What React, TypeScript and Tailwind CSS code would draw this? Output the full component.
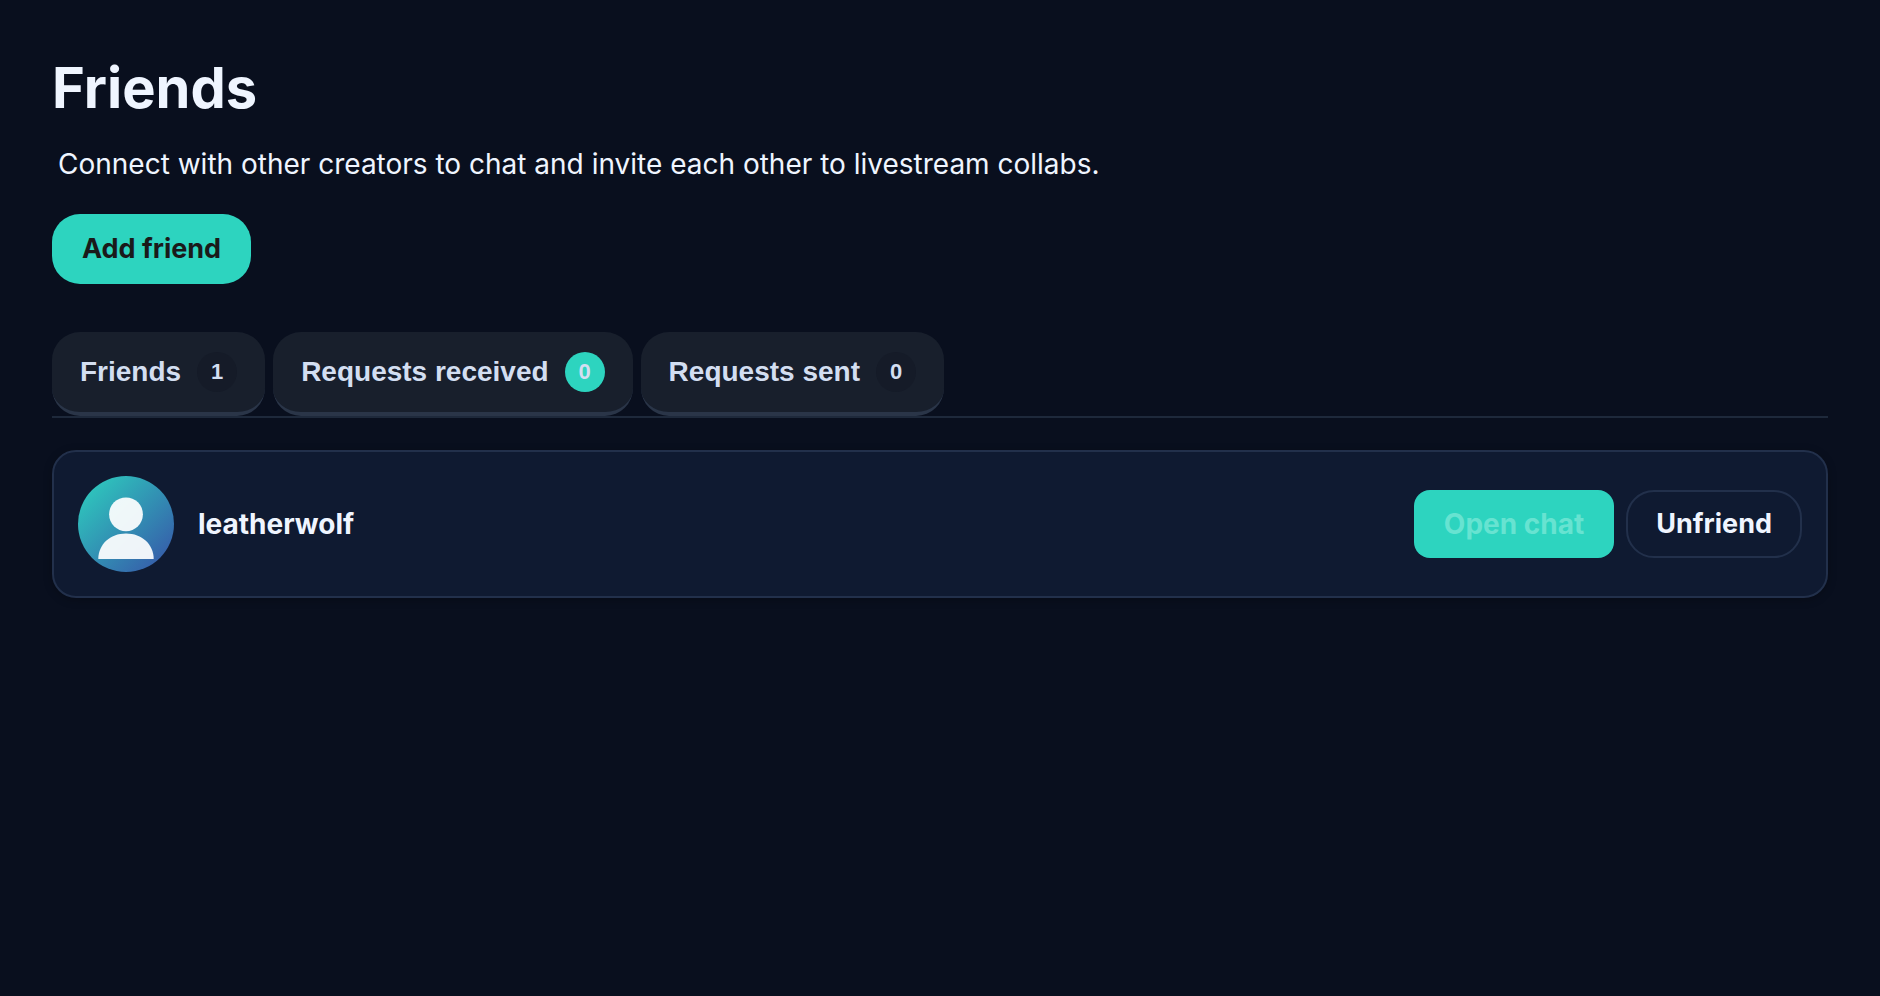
import { useState } from "react";

type Tab = { id: string; label: string; count: number; highlight?: boolean };

const tabs: Tab[] = [
  { id: "friends", label: "Friends", count: 1 },
  { id: "received", label: "Requests received", count: 0, highlight: true },
  { id: "sent", label: "Requests sent", count: 0 },
];

const friends = ["leatherwolf"];

function Avatar() {
  return (
    <svg viewBox="0 0 96 96" className="size-24 shrink-0" aria-hidden="true">
      <defs>
        <linearGradient id="avatar-fill" x1="0" y1="0" x2="1" y2="1">
          <stop offset="0" stopColor="#2dd4bf" />
          <stop offset="1" stopColor="#3750a8" />
        </linearGradient>
      </defs>
      <circle cx="48" cy="48" r="48" fill="url(#avatar-fill)" />
      <g fill="#fff" fillOpacity="0.92">
        <circle cx="48" cy="38.3" r="16.9" />
        <path d="M20.3 83C20.3 68.5 32 57.5 48 57.5S75.7 68.5 75.7 83Z" />
      </g>
    </svg>
  );
}

export default function App() {
  const [active, setActive] = useState("friends");

  return (
    <main className="min-h-screen bg-[#090f1e] px-[52px] pt-[52px] pb-12 font-['Inter',sans-serif] text-[28px] leading-10 text-[#eff5ff]">
      <h1 className="text-[56px] leading-[72px] font-bold">Friends</h1>
      <p className="mt-5 px-1.5">
        Connect with other creators to chat and invite each other to livestream collabs.
      </p>
      <button
        type="button"
        className="mt-[30px] h-[70px] rounded-[28px] bg-[#2dd4bf] px-[30px] text-[27px] font-bold text-[#1a1a1a]"
      >
        Add friend
      </button>

      <div role="tablist" className="mt-12 flex gap-2 border-b-2 border-[#1e293b] font-['Liberation_Sans',sans-serif]">
        {tabs.map((tab) => (
          <button
            key={tab.id}
            type="button"
            role="tab"
            aria-selected={active === tab.id}
            onClick={() => setActive(tab.id)}
            className="flex h-[84px] items-center gap-4 rounded-[28px] border-b-4 border-[#2a3548] bg-[#181f2c] px-7 font-bold text-[#d3def1]"
          >
            {tab.label}
            <span
              className={
                tab.highlight
                  ? "grid size-10 place-items-center rounded-full bg-[#2dd4bf] text-[22px]"
                  : "grid size-10 place-items-center rounded-full bg-[#151b28] text-[22px]"
              }
            >
              {tab.count}
            </span>
          </button>
        ))}
      </div>

      <ul className="mt-8">
        {friends.map((name) => (
          <li
            key={name}
            className="flex items-center gap-6 rounded-3xl border-2 border-[#22304b] bg-[#0f1a31] p-6 shadow-[0_2px_8px_rgba(0,0,0,0.25)]"
          >
            <Avatar />
            <span className="flex-1 font-bold">{name}</span>
            <div className="flex gap-3">
              <button type="button" className="h-[68px] rounded-2xl bg-[#2dd4bf] px-[30px] font-bold text-[#67e3d1]">
                Open chat
              </button>
              <button type="button" className="h-[68px] rounded-[28px] border-2 border-[#22304b] px-7 text-[27px] font-bold">
                Unfriend
              </button>
            </div>
          </li>
        ))}
      </ul>
    </main>
  );
}
